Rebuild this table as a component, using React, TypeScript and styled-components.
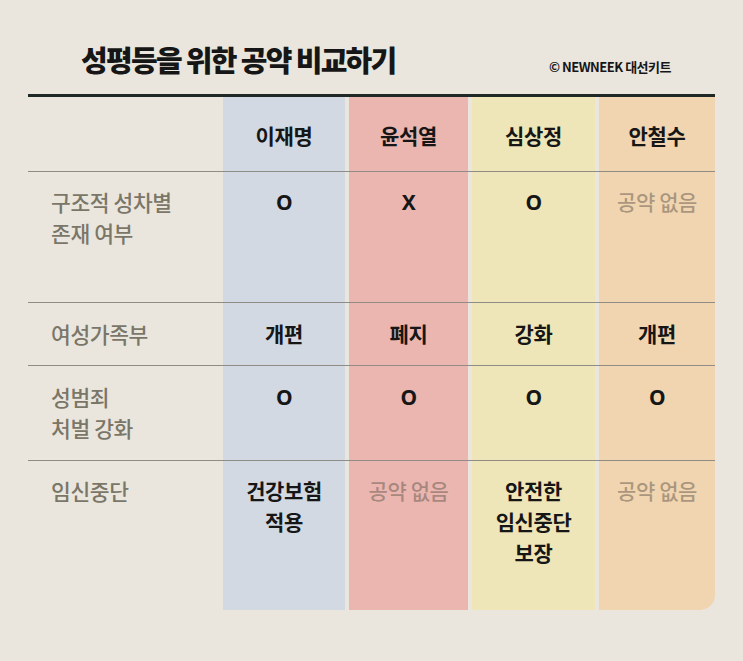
import styled, { createGlobalStyle } from "styled-components";

const GlobalStyle = createGlobalStyle`
  html, body {
    margin: 0;
    padding: 0;
    background: #eae6de;
  }
  body {
    font-family: "Noto Sans CJK KR", "Noto Sans", sans-serif;
  }
`;

const color = {
  bg: "#eae6de",
  ink: "#161616",
  label: "#7a7668",
  rule: "#8e8c84",
  thick: "#1f2824",
  empty: "rgba(100, 88, 76, 0.5)",
};

const columnColors = ["#d2d9e3", "#ebb6b0", "#eee6b8", "#f0d5b0"];

const Page = styled.div`
  width: 743px;
  height: 661px;
  box-sizing: border-box;
  background: ${color.bg};
  overflow: hidden;
`;

const Header = styled.header`
  box-sizing: border-box;
  height: 94px;
  padding: 42px 72px 0 81px;
  display: flex;
  justify-content: space-between;
  align-items: flex-start;
`;

const Title = styled.h1`
  margin: 0;
  font-size: 29px;
  line-height: 34px;
  font-weight: 900;
  letter-spacing: -1.7px;
  color: ${color.ink};
`;

const Credit = styled.span`
  margin-top: 17px;
  font-size: 13px;
  line-height: 16px;
  font-weight: 700;
  letter-spacing: -0.5px;
  color: ${color.ink};
`;

const Table = styled.div`
  margin: 0 28px;
`;

const Row = styled.div<{ $head?: boolean }>`
  display: grid;
  grid-template-columns: 191px 122px 119px 123px 116px;
  column-gap: 4px;
  border-top: ${(p) => (p.$head ? `3px solid ${color.thick}` : `1px solid ${color.rule}`)};
`;

const Label = styled.div<{ $h: number; $pad: number }>`
  height: ${(p) => p.$h}px;
  padding: ${(p) => p.$pad}px 0 0 23px;
  box-sizing: border-box;
  font-size: 21.5px;
  line-height: 31px;
  font-weight: 500;
  letter-spacing: -0.4px;
  color: ${color.label};
`;

const Cell = styled.div<{ $col: number; $h: number; $pad: number; $last?: boolean }>`
  height: ${(p) => p.$h}px;
  padding-top: ${(p) => p.$pad}px;
  box-sizing: border-box;
  background: ${(p) => columnColors[p.$col]};
  border-bottom-right-radius: ${(p) => (p.$last && p.$col === 3 ? "15px" : "0")};
  text-align: center;
  font-size: 21px;
  line-height: 31px;
  font-weight: 700;
  letter-spacing: -0.4px;
  color: ${color.ink};
`;

const Empty = styled.span`
  color: ${color.empty};
  font-weight: 500;
`;

const Mark = styled.span`
  font-family: "Noto Sans", "Liberation Sans", sans-serif;
  font-size: 21px;
  font-weight: 700;
`;

type Value = string | null;

const candidates = ["이재명", "윤석열", "심상정", "안철수"];

const rows: { label: string[]; values: Value[]; h: number; pad: number }[] = [
  { label: ["구조적 성차별", "존재 여부"], values: ["O", "X", "O", null], h: 130, pad: 14 },
  { label: ["여성가족부"], values: ["개편", "폐지", "강화", "개편"], h: 62, pad: 15 },
  { label: ["성범죄", "처벌 강화"], values: ["O", "O", "O", "O"], h: 94, pad: 15 },
  {
    label: ["임신중단"],
    values: ["건강보험\n적용", null, "안전한\n임신중단\n보장", null],
    h: 149,
    pad: 14,
  },
];

const renderValue = (v: Value) => {
  if (v === null) return <Empty>공약 없음</Empty>;
  if (v === "O" || v === "X") return <Mark>{v}</Mark>;
  return v.split("\n").map((line, i) => <div key={i}>{line}</div>);
};

const App = () => {
  return (
    <Page>
      <GlobalStyle />
      <Header>
        <Title>성평등을 위한 공약 비교하기</Title>
        <Credit>© NEWNEEK 대선키트</Credit>
      </Header>
      <Table>
        <Row $head>
          <Label $h={74} $pad={0} />
          {candidates.map((name, i) => (
            <Cell key={name} $col={i} $h={74} $pad={23}>
              {name}
            </Cell>
          ))}
        </Row>
        {rows.map((row, r) => (
          <Row key={r}>
            <Label $h={row.h} $pad={row.pad}>
              {row.label.map((line, i) => (
                <div key={i}>{line}</div>
              ))}
            </Label>
            {row.values.map((v, i) => (
              <Cell key={i} $col={i} $h={row.h} $pad={row.pad} $last={r === rows.length - 1}>
                {renderValue(v)}
              </Cell>
            ))}
          </Row>
        ))}
      </Table>
    </Page>
  );
};

export default App;
